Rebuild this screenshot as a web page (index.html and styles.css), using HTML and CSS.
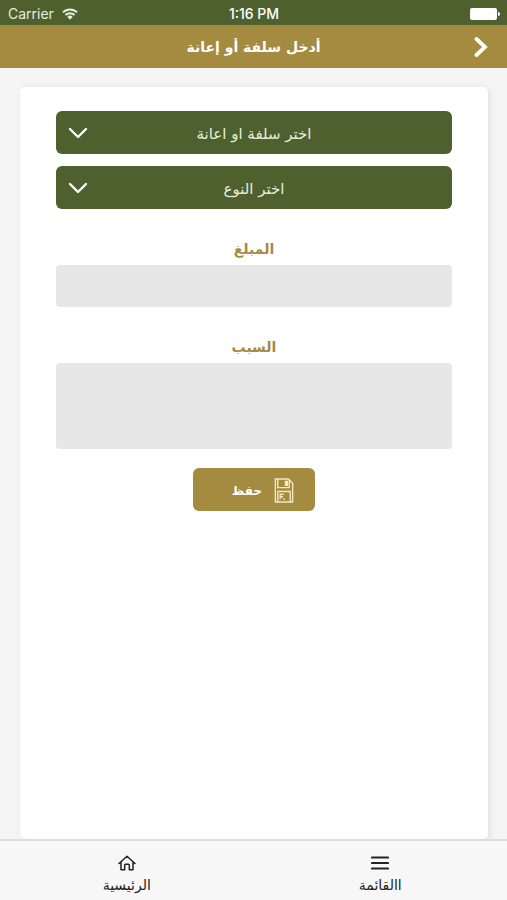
FILE: index.html
```html
<!DOCTYPE html>
<html lang="ar" dir="rtl">
<head>
<meta charset="utf-8">
<meta name="viewport" content="width=device-width, initial-scale=1">
<title>أدخل سلفة أو إعانة</title>
<link rel="stylesheet" href="styles.css">
</head>
<body>
<div class="status" dir="ltr">
  <div class="carrier">
    <span>Carrier</span>
    <svg class="wifi" viewBox="0 0 16 12" aria-hidden="true">
      <path d="M1 4.400a10 10 0 0 1 14 0M3.500 7a6.500 6.500 0 0 1 9 0" fill="none" stroke="currentColor" stroke-width="1.900"/>
      <path d="M5.300 8.900a3.900 3.900 0 0 1 5.400 0L8 11.700z" fill="currentColor"/>
    </svg>
  </div>
  <span class="time">1:16 PM</span>
  <svg class="battery" viewBox="0 0 30 12" aria-hidden="true">
    <rect width="27" height="12" rx="2" fill="currentColor"/>
    <path d="M28 4a2 2 0 0 1 0 4z" fill="currentColor"/>
  </svg>
</div>
<header class="header">
  <button class="back" type="button" aria-label="رجوع">
    <svg viewBox="0 0 14 20" aria-hidden="true"><path d="M2.500 2l8.500 8-8.500 8" fill="none" stroke="currentColor" stroke-width="3.800" stroke-linecap="round"/></svg>
  </button>
  <h1 class="title">أدخل سلفة أو إعانة</h1>
</header>
<main class="main">
  <form class="card">
    <div class="picker">
      <select class="select" aria-label="اختر سلفة او اعانة"><option>اختر سلفة او اعانة</option></select>
      <svg class="chevron" viewBox="0 0 20 12" aria-hidden="true"><path d="M2 2l8 8 8-8" fill="none" stroke="currentColor" stroke-width="2.400" stroke-linecap="round" stroke-linejoin="round"/></svg>
    </div>
    <div class="picker">
      <select class="select" aria-label="اختر النوع"><option>اختر النوع</option></select>
      <svg class="chevron" viewBox="0 0 20 12" aria-hidden="true"><path d="M2 2l8 8 8-8" fill="none" stroke="currentColor" stroke-width="2.400" stroke-linecap="round" stroke-linejoin="round"/></svg>
    </div>
    <label class="label" for="amount">المبلغ</label>
    <input class="field" id="amount" type="text" inputmode="decimal">
    <label class="label" for="reason">السبب</label>
    <textarea class="field area" id="reason"></textarea>
    <button class="save" type="submit">
      <svg class="disk" viewBox="0 0 20 26" aria-hidden="true">
        <g fill="none" stroke="currentColor" stroke-width="1.400">
          <path d="M1 1h13.500l4.500 4.500V25H1z"/>
          <path d="M3.500 1v9h12V2M3.500 25V14h13v11M6 22v-5h4M6 19.500h3M9 22h2"/>
          <path d="M11.500 3.500h2v4h-2z" fill="currentColor"/>
        </g>
      </svg>
      <span>حفظ</span>
    </button>
  </form>
</main>
<nav class="tabs">
  <a class="tab" href="#menu">
    <svg class="tab-icon" viewBox="0 0 18 16" aria-hidden="true"><path d="M1 2.500h16M1 8h16M1 13.500h16" stroke="currentColor" stroke-width="2.200" stroke-linecap="round"/></svg>
    <span>االقائمة</span>
  </a>
  <a class="tab" href="#home">
    <svg class="tab-icon" viewBox="0 0 18 16" aria-hidden="true"><path d="M1 8.500L9 1.300l8 7.200M3 7v7.700h3.700V10q0-.8.800-.8h3q.8 0 .8.800v4.700H15V7" fill="none" stroke="currentColor" stroke-width="1.500" stroke-linejoin="round" stroke-linecap="round"/></svg>
    <span>الرئيسية</span>
  </a>
</nav>
</body>
</html>
```
FILE: styles.css
```css
* {
  box-sizing: border-box;
}

body {
  margin: 0;
  min-height: 100vh;
  display: flex;
  flex-direction: column;
  background: #f5f5f5;
  font-family: "DejaVu Sans", sans-serif;
  font-size: 14px;
}

.status {
  display: grid;
  grid-template-columns: 1fr auto 1fr;
  align-items: center;
  height: 25px;
  padding: 2px 7px 0 8px;
  background: #4e602e;
  color: #fff;
  font-family: Inter, sans-serif;
  font-size: 14px;
}

.carrier {
  display: flex;
  align-items: center;
  gap: 8px;
  color: #e6eedd;
}

.wifi {
  width: 16px;
  height: 12px;
}

.time {
  font-weight: 500;
}

.battery {
  width: 30px;
  height: 12px;
  justify-self: end;
}

.header {
  display: grid;
  grid-template-columns: 40px 1fr 40px;
  align-items: center;
  height: 43px;
  padding: 0 6px;
  background: #a58b3f;
  color: #fff;
}

.back {
  display: grid;
  place-items: center;
  height: 43px;
  padding: 0;
  border: 0;
  background: none;
  color: inherit;
}

.back svg {
  width: 14px;
  height: 20px;
}

.title {
  margin: 0;
  font-size: 14px;
  line-height: 24px;
  text-align: center;
}

.main {
  flex: 1;
  display: flex;
  padding: 19px 19px 0 20px;
}

.card {
  flex: 1;
  display: flex;
  flex-direction: column;
  padding: 24px 36px;
  border-radius: 5px;
  background: #fff;
  box-shadow: 2px 1px 6px #dde0e0;
}

.picker {
  display: grid;
  align-items: center;
  margin-bottom: 12px;
  color: #fff;
}

.select,
.chevron {
  grid-area: 1 / 1;
}

.select {
  appearance: none;
  width: 100%;
  height: 43px;
  padding: 2px 40px 0;
  border: 0;
  border-radius: 6px;
  background: #4e602e;
  color: #e6eedd;
  font: inherit;
  font-size: 15px;
  text-align: center;
  text-align-last: center;
}

.chevron {
  width: 20px;
  height: 12px;
  margin-left: 12px;
  justify-self: end;
  pointer-events: none;
}

.label {
  margin: 28px 0 4px;
  color: #a58b3f;
  font-weight: bold;
  line-height: 24px;
  text-align: center;
}

.picker + .label {
  margin-top: 16px;
}

.field {
  width: 100%;
  height: 42px;
  padding: 8px 12px;
  border: 0;
  border-radius: 4px;
  background: #e7e7e7;
  font: inherit;
}

.area {
  height: 86px;
  resize: none;
}

.save {
  display: flex;
  align-items: center;
  align-self: center;
  gap: 12px;
  width: 122px;
  height: 43px;
  margin-top: 19px;
  padding: 2px 21px 0;
  border: 0;
  border-radius: 6px;
  background: #a58b3f;
  color: #fff;
  font: inherit;
  font-size: 12px;
  font-weight: bold;
}

.disk {
  width: 20px;
  height: 25px;
  color: #f3e9c8;
}

.tabs {
  display: flex;
  height: 61px;
  border-top: 2px solid #dedede;
  background: #f7f7f7;
}

.tab {
  flex: 1;
  display: flex;
  flex-direction: column;
  align-items: center;
  gap: 4px;
  padding-top: 14px;
  color: #222;
  line-height: 20px;
  text-decoration: none;
}

.tab-icon {
  width: 18px;
  height: 16px;
}
```
